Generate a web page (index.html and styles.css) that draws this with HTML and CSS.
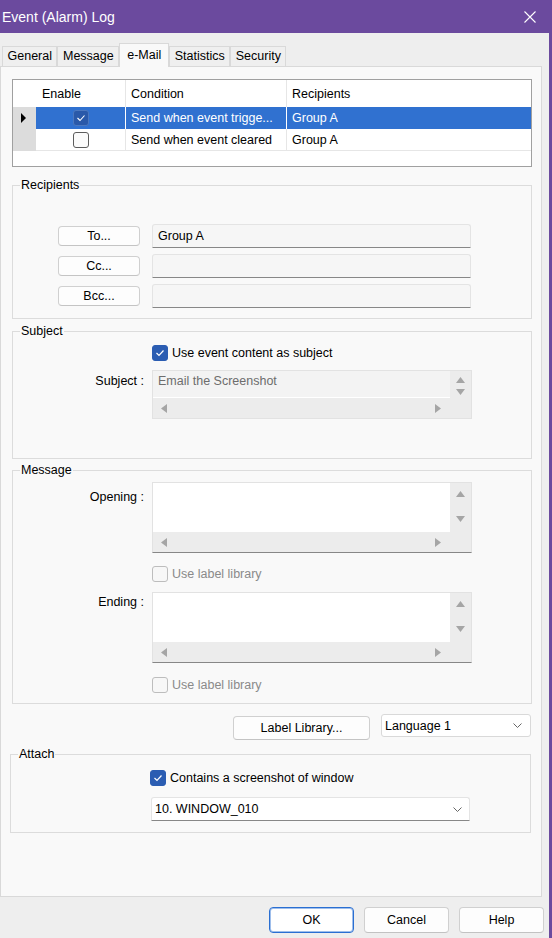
FILE: index.html
```html
<!DOCTYPE html>
<html>
<head>
<meta charset="utf-8">
<title>Event (Alarm) Log</title>
<link rel="stylesheet" href="styles.css">
</head>
<body>
<div class="window">
  <div class="titlebar">
    <span class="title">Event (Alarm) Log</span>
    <svg class="close" width="12" height="12" viewBox="0 0 12 12"><path d="M0.5 0.5 L11.5 11.5 M11.5 0.5 L0.5 11.5" stroke="#fff" stroke-width="1.1" fill="none"/></svg>
  </div>
  <div class="frame">
    <div class="tabs">
      <div class="tab">General</div>
      <div class="tab">Message</div>
      <div class="tab active">e-Mail</div>
      <div class="tab">Statistics</div>
      <div class="tab">Security</div>
    </div>
    <div class="panel">
      <div class="grid">
        <div class="c rh0"></div>
        <div class="c h first">Enable</div>
        <div class="c h">Condition</div>
        <div class="c h last">Recipients</div>

        <div class="c rh"><svg width="5" height="10" viewBox="0 0 5 10"><path d="M0 0 L5 5 L0 10Z" fill="#000"/></svg></div>
        <div class="c sel sepw center"><span class="cb cb-sel"><svg width="10" height="8" viewBox="0 0 10 8"><path d="M1.5 4 L4 6.5 L8.5 1.5" stroke="#fff" stroke-width="1.1" fill="none"/></svg></span></div>
        <div class="c sel sepw">Send when event trigge...</div>
        <div class="c sel">Group A</div>

        <div class="c rh"></div>
        <div class="c sepg bl center"><span class="cb"></span></div>
        <div class="c sepg bl">Send when event cleared</div>
        <div class="c bl">Group A</div>
      </div>

      <div class="group g-recipients">
        <div class="group-title">Recipients</div>
        <div class="rrow first-row"><button class="btn">To...</button><div class="field">Group A</div></div>
        <div class="rrow"><button class="btn">Cc...</button><div class="field"></div></div>
        <div class="rrow"><button class="btn">Bcc...</button><div class="field"></div></div>
      </div>

      <div class="group g-subject">
        <div class="group-title">Subject</div>
        <div class="cbrow cb-subject"><span class="cb cb-on"><svg width="10" height="8" viewBox="0 0 10 8"><path d="M1.5 4 L4 6.5 L8.5 1.5" stroke="#fff" stroke-width="1.2" fill="none"/></svg></span><span>Use event content as subject</span></div>
        <div class="frow fr-subject">
          <div class="flabel">Subject :</div>
          <div class="tbox tbox-short">
            <div class="tarea tarea-dis">Email the Screenshot</div>
            <div class="vs"><svg width="9" height="6" viewBox="0 0 9 6"><path d="M0 6 L4.5 0 L9 6Z" fill="#a5a5a5"/></svg><svg width="9" height="6" viewBox="0 0 9 6"><path d="M0 0 L4.5 6 L9 0Z" fill="#a5a5a5"/></svg></div>
            <div class="hs"><svg width="6" height="9" viewBox="0 0 6 9"><path d="M6 0 L0 4.5 L6 9Z" fill="#a5a5a5"/></svg><svg width="6" height="9" viewBox="0 0 6 9"><path d="M0 0 L6 4.5 L0 9Z" fill="#a5a5a5"/></svg></div>
            <div class="corner"></div>
          </div>
        </div>
      </div>

      <div class="group g-message">
        <div class="group-title">Message</div>
        <div class="frow fr-opening">
          <div class="flabel">Opening :</div>
          <div class="tbox tbox-tall">
            <div class="tarea"></div>
            <div class="vs vs-tall"><svg width="9" height="6" viewBox="0 0 9 6"><path d="M0 6 L4.5 0 L9 6Z" fill="#a5a5a5"/></svg><svg width="9" height="6" viewBox="0 0 9 6"><path d="M0 0 L4.5 6 L9 0Z" fill="#a5a5a5"/></svg></div>
            <div class="hs"><svg width="6" height="9" viewBox="0 0 6 9"><path d="M6 0 L0 4.5 L6 9Z" fill="#a5a5a5"/></svg><svg width="6" height="9" viewBox="0 0 6 9"><path d="M0 0 L6 4.5 L0 9Z" fill="#a5a5a5"/></svg></div>
            <div class="corner"></div>
          </div>
        </div>
        <div class="cbrow cb-lib1"><span class="cb cb-dis"></span><span class="dis-text">Use label library</span></div>
        <div class="frow fr-ending">
          <div class="flabel">Ending :</div>
          <div class="tbox tbox-tall">
            <div class="tarea"></div>
            <div class="vs vs-tall"><svg width="9" height="6" viewBox="0 0 9 6"><path d="M0 6 L4.5 0 L9 6Z" fill="#a5a5a5"/></svg><svg width="9" height="6" viewBox="0 0 9 6"><path d="M0 0 L4.5 6 L9 0Z" fill="#a5a5a5"/></svg></div>
            <div class="hs"><svg width="6" height="9" viewBox="0 0 6 9"><path d="M6 0 L0 4.5 L6 9Z" fill="#a5a5a5"/></svg><svg width="6" height="9" viewBox="0 0 6 9"><path d="M0 0 L6 4.5 L0 9Z" fill="#a5a5a5"/></svg></div>
            <div class="corner"></div>
          </div>
        </div>
        <div class="cbrow cb-lib2"><span class="cb cb-dis"></span><span class="dis-text">Use label library</span></div>
      </div>

      <div class="librow">
        <button class="btn btn-lib">Label Library...</button>
        <div class="combo combo-lang"><span>Language 1</span><svg width="9" height="5" viewBox="0 0 9 5"><path d="M0.5 0.5 L4.5 4.5 L8.5 0.5" stroke="#666" fill="none"/></svg></div>
      </div>

      <div class="group g-attach">
        <div class="group-title">Attach</div>
        <div class="cbrow cb-attach"><span class="cb cb-on"><svg width="10" height="8" viewBox="0 0 10 8"><path d="M1.5 4 L4 6.5 L8.5 1.5" stroke="#fff" stroke-width="1.2" fill="none"/></svg></span><span>Contains a screenshot of window</span></div>
        <div class="combo combo-win"><span>10. WINDOW_010</span><svg width="9" height="5" viewBox="0 0 9 5"><path d="M0.5 0.5 L4.5 4.5 L8.5 0.5" stroke="#666" fill="none"/></svg></div>
      </div>
    </div>
    <div class="footer">
      <button class="fbtn ok">OK</button>
      <button class="fbtn">Cancel</button>
      <button class="fbtn">Help</button>
    </div>
  </div>
</div>
</body>
</html>
```
FILE: styles.css
```css
* { box-sizing: border-box; }

body {
  margin: 0;
  font-family: "Liberation Sans", Arial, sans-serif;
  font-size: 12.5px;
  color: #000;
  background: #eeeeee;
}

.window {
  width: 552px;
  height: 938px;
  display: flex;
  flex-direction: column;
  overflow: hidden;
}

.titlebar {
  flex: none;
  height: 33px;
  background: #6b4a9e;
  color: #fff;
  font-size: 14px;
  display: flex;
  align-items: center;
  justify-content: space-between;
  padding: 0 16px 0 2px;
}

.frame {
  flex: 1;
  display: flex;
  flex-direction: column;
  background: #eeeeee;
  border-right: 3px solid #6b4a9e;
}

/* Tabs */
.tabs {
  flex: none;
  display: flex;
  align-items: flex-end;
  padding: 10px 0 0 2px;
  margin-bottom: -1px;
}

.tab {
  height: 21px;
  padding: 0 4.5px;
  line-height: 19px;
  border: 1px solid #d9d9d9;
  border-bottom: none;
  background: #efefef;
  white-space: nowrap;
}

.tab.active {
  height: 24px;
  padding: 0 7px;
  line-height: 22px;
  background: #f9f9f9;
  position: relative;
  z-index: 1;
}

/* Panel */
.panel {
  flex: none;
  width: 542px;
  height: 831px;
  border: 1px solid #d9d9d9;
  background: #f9f9f9;
}

/* Grid */
.grid {
  margin: 12px 0 0 11px;
  width: 520px;
  height: 88px;
  border: 1px solid #a0a0a0;
  background: #fff;
  display: grid;
  grid-template-columns: 23px 90px 161px 1fr;
  grid-template-rows: 27px 22px 22px;
  align-content: start;
}

.c {
  display: flex;
  align-items: center;
  padding-left: 5px;
  white-space: nowrap;
  overflow: hidden;
}

.c.h { border-right: 1px solid #e6e6e6; }
.c.h.first { padding-left: 6px; }
.c.h.last { border-right: none; }

.c.rh { background: #dcdcdc; padding-left: 8px; }
.c.sel { background: #3071d0; color: #fff; }
.c.sepw { border-right: 1px solid #fff; }
.c.sepg { border-right: 1px solid #e6e6e6; }
.c.bl { border-bottom: 1px solid #e6e6e6; }
.c.center { justify-content: center; padding-left: 0; }

/* Checkboxes */
.cb {
  flex: none;
  width: 16px;
  height: 16px;
  border: 1px solid #5c5c5c;
  border-radius: 3px;
  background: #fbfbfb;
  display: inline-flex;
  align-items: center;
  justify-content: center;
}

.cb-sel { background: #2a59a9; border-color: #4c78bf; }
.cb-on { background: #2b5db2; border-color: #2b5db2; }
.cb-dis { background: #f7f7f7; border-color: #bdbdbd; }

.cbrow {
  display: flex;
  align-items: center;
  gap: 4px;
  height: 16px;
}

.cb-subject { margin: 7px 0 0 139px; }
.cb-lib1 { margin: 13px 0 0 139px; }
.cb-lib2 { margin: 14px 0 0 139px; }
.cb-attach { margin: 9px 0 0 139px; }

.dis-text { color: #8a8a8a; }

/* Groups */
.group {
  margin: 18px 0 0 11px;
  width: 520px;
  border: 1px solid #dcdcdc;
}

.group-title {
  width: fit-content;
  margin: -8px 0 0 7px;
  padding: 0 1px;
  line-height: 14px;
  background: #f9f9f9;
}

.g-recipients { padding-bottom: 10px; }
.g-subject { margin-top: 12px; padding-bottom: 39px; }
.g-message { margin-top: 11px; padding-bottom: 10px; }
.g-attach { margin: 14px 0 0 9px; width: 521px; padding-bottom: 11px; }

/* Recipients rows */
.rrow {
  display: flex;
  align-items: center;
  gap: 12px;
  padding-left: 45px;
  margin-top: 6px;
}

.rrow.first-row { margin-top: 32px; }

.btn {
  font-family: inherit;
  font-size: 12.5px;
  color: #000;
  padding: 0;
  width: 82px;
  height: 20px;
  border: 1px solid #d0d0d0;
  border-bottom-color: #c4c4c4;
  border-radius: 4px;
  background: #fdfdfd;
}

.field {
  width: 319px;
  height: 24px;
  border: 1px solid #e4e4e4;
  border-bottom-color: #878787;
  border-radius: 3px 3px 0 0;
  background: #f6f6f6;
  padding-left: 5px;
  display: flex;
  align-items: center;
}

/* Label + text box rows */
.frow {
  display: grid;
  grid-template-columns: 131px 320px;
  column-gap: 8px;
  align-items: start;
}

.flabel {
  text-align: right;
  line-height: 14px;
}

.fr-subject { margin-top: 9px; }
.fr-subject .flabel { margin-top: 4px; }
.fr-opening { margin-top: 5px; }
.fr-opening .flabel { margin-top: 8px; }
.fr-ending { margin-top: 10px; }
.fr-ending .flabel { margin-top: 3px; }

.tbox {
  width: 320px;
  display: grid;
  grid-template-columns: 1fr 21px;
  border: 1px solid #e2e2e2;
  background: #ececec;
}

.tbox-short { grid-template-rows: 27px 20px; }
.tbox-tall { grid-template-rows: 49px 20px; border-bottom-color: #878787; }

.tarea {
  background: #fff;
  padding: 3px 0 0 5px;
  line-height: 14px;
}

.tarea-dis {
  background: #f3f3f3;
  color: #6d6d6d;
  border-bottom: 1px solid #fff;
}

.vs {
  display: flex;
  flex-direction: column;
  align-items: center;
  padding-top: 6px;
  gap: 6px;
}

.vs-tall { padding-top: 8px; gap: 19px; }

.hs {
  display: flex;
  align-items: center;
  justify-content: space-between;
  padding: 0 9px 0 8px;
}

/* Label library row */
.librow {
  display: flex;
  justify-content: flex-end;
  align-items: flex-start;
  gap: 11px;
  margin: 10px 10px 0 0;
}

.btn-lib {
  width: 137px;
  height: 24px;
  margin-top: 2px;
}

.combo {
  display: flex;
  align-items: center;
  justify-content: space-between;
  background: #fff;
  border: 1px solid #d9d9d9;
  border-radius: 3px;
}

.combo-lang {
  width: 150px;
  height: 23px;
  padding: 0 8px 0 3px;
}

.combo-win {
  width: 319px;
  height: 24px;
  margin: 11px 0 0 140px;
  padding: 0 7px 0 3px;
  border-color: #e4e4e4;
  border-bottom-color: #878787;
  border-radius: 3px 3px 0 0;
}

/* Footer */
.footer {
  display: flex;
  justify-content: flex-end;
  gap: 10px;
  padding: 10px 5px 0 0;
}

.fbtn {
  font-family: inherit;
  font-size: 12.5px;
  color: #000;
  padding: 0;
  width: 85px;
  height: 26px;
  border: 1px solid #d0d0d0;
  border-bottom-color: #c2c2c2;
  border-radius: 4px;
  background: #fdfdfd;
}

.fbtn.ok {
  background: #fff;
  border-color: #2a6fd2;
  box-shadow: inset 0 0 0 1px rgba(42, 111, 210, 0.45);
}
```
